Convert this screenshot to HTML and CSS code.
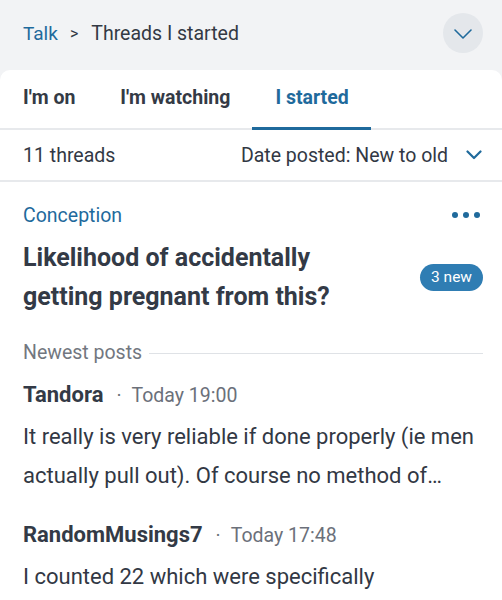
FILE: index.html
```html
<!DOCTYPE html>
<html lang="en">
<head>
  <meta charset="UTF-8" />
  <meta name="viewport" content="width=device-width, initial-scale=1.0"/>
  <title>Talk – Threads I started</title>
  <link rel="stylesheet" href="styles.css">
</head>
<body>
  <header class="topbar">
    <nav class="crumbs">
      <a class="crumb-link" href="#">Talk</a>
      <span class="crumb-sep">&gt;</span>
      <span class="crumb-current">Threads I started</span>
    </nav>
    <button class="round-btn" aria-label="More">
      <svg width="18" height="10" viewBox="0 0 18 10"><path d="M1 1l8 8 8-8" fill="none" stroke="#1f6a9c" stroke-width="1.6" stroke-linecap="round" stroke-linejoin="round"/></svg>
    </button>
  </header>

  <main class="card">
    <div class="tabs">
      <a class="tab" href="#">I'm on</a>
      <a class="tab" href="#">I'm watching</a>
      <a class="tab active" href="#">I started</a>
    </div>

    <div class="toolbar">
      <span>11 threads</span>
      <span class="sort">Date posted: New to old
        <svg width="16" height="10" viewBox="0 0 16 10"><path d="M1.5 1.5l6.5 6.5 6.5-6.5" fill="none" stroke="#1f6a9c" stroke-width="2.2" stroke-linecap="round" stroke-linejoin="round"/></svg>
      </span>
    </div>

    <article class="thread">
      <div class="thread-top">
        <a class="topic" href="#">Conception</a>
        <span class="dots"><i></i><i></i><i></i></span>
      </div>
      <div class="thread-head">
        <h2 class="title">Likelihood of accidentally getting pregnant from this?</h2>
        <span class="badge">3 new</span>
      </div>
      <div class="divider-label"><span>Newest posts</span></div>

      <div class="post">
        <div class="post-meta"><b>Tandora</b><span class="dot">·</span><span class="time">Today 19:00</span></div>
        <p class="post-text">It really is very reliable if done properly (ie men actually pull out). Of course no method of…</p>
      </div>
      <div class="post">
        <div class="post-meta"><b>RandomMusings7</b><span class="dot">·</span><span class="time">Today 17:48</span></div>
        <p class="post-text">I counted 22 which were specifically</p>
      </div>
    </article>
  </main>
</body>
</html>
```

FILE: styles.css
```css
body {
  margin: 0;
  font-family: Roboto, 'Noto Sans', sans-serif;
  background-color: #f2f3f5;
  color: #323844;
  overflow: hidden;
}
a {
  text-decoration: none;
}
.topbar {
  height: 70px;
  display: flex;
  align-items: center;
  justify-content: space-between;
  padding: 0 19px 4px 23px;
  box-sizing: border-box;
}
.crumbs {
  font-size: 19px;
  display: flex;
  align-items: center;
}
.crumb-link {
  color: #1f6a9c;
}
.crumb-sep {
  margin: 0 13px 0 12px;
  font-size: 16px;
}
.crumb-current {
  color: #333944;
  font-size: 19.5px;
}
.round-btn {
  width: 40px;
  height: 40px;
  border-radius: 50%;
  border: none;
  background-color: #e4e7eb;
  display: flex;
  align-items: center;
  justify-content: center;
  padding: 2px 0 0;
}
.card {
  background: #fff;
  border-radius: 10px 10px 0 0;
  min-height: 540px;
}
.tabs {
  display: flex;
  height: 58px;
  border-bottom: 2px solid #e7e9ec;
}
.tab {
  font-size: 19.5px;
  font-weight: 700;
  color: #343a45;
  padding: 16px 22px 0 23px;
  box-sizing: border-box;
}
.tab:nth-child(2) {
  padding: 16px 22px 0 23px;
}
.tab.active {
  color: #1f6a9c;
  border-bottom: 3px solid #1f6a9c;
  margin-bottom: -2px;
}
.toolbar {
  height: 50px;
  display: flex;
  align-items: center;
  justify-content: space-between;
  padding: 0 20px 0 23px;
  font-size: 19.5px;
  color: #323844;
  border-bottom: 2px solid #e7e9ec;
}
.sort {
  display: flex;
  align-items: center;
  gap: 18px;
}
.thread {
  padding: 19px 19px 0 23px;
}
.thread-top {
  display: flex;
  justify-content: space-between;
  align-items: center;
  height: 28px;
}
.topic {
  color: #1f6a9c;
  font-size: 19.5px;
}
.dots {
  display: flex;
  gap: 5px;
  padding-right: 3px;
}
.dots i {
  width: 6px;
  height: 6px;
  border-radius: 50%;
  background: #1f6a9c;
}
.thread-head {
  display: flex;
  align-items: center;
  justify-content: space-between;
  margin-top: 9px;
}
.title {
  margin: 0;
  font-size: 25px;
  line-height: 39px;
  font-weight: 700;
  color: #333a46;
  max-width: 360px;
}
.badge {
  background: #2f7db3;
  color: #fff;
  font-size: 15.5px;
  border-radius: 14px;
  padding: 4px 11px 5px;
}
.divider-label {
  display: flex;
  align-items: center;
  gap: 7px;
  margin-top: 25px;
  font-size: 19.5px;
  color: #727780;
}
.divider-label::after {
  content: "";
  flex: 1;
  height: 1px;
  background: #dfe2e6;
  margin-top: 2px;
}
.post {
  margin-top: 18px;
}
.post + .post {
  margin-top: 27px;
}
.post-meta {
  font-size: 19.5px;
  line-height: 26px;
  color: #6b707a;
  display: flex;
  align-items: baseline;
}
.post-meta b {
  font-size: 22px;
  color: #333a46;
}
.dot {
  margin: 0 10px 0 13px;
}
.post-text {
  margin: 8px 0 0;
  font-size: 22px;
  line-height: 39px;
  color: #323844;
}
```
